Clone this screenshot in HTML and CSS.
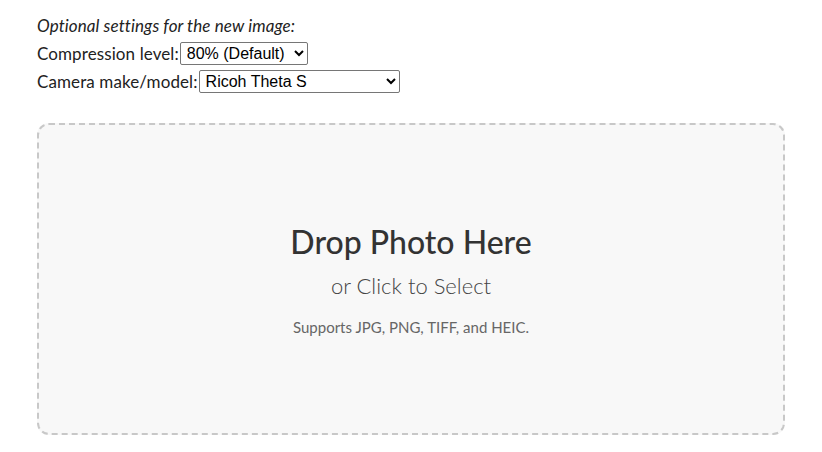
FILE: index.html
```html
<!DOCTYPE html>
<html>
<head>
<meta charset="utf-8">
<link rel="stylesheet" href="styles.css">
</head>
<body>
<div class="page">
  <div class="settings">
    <div class="row note">Optional settings for the new image:</div>
    <div class="row">
      <label for="q">Compression level:</label><select id="q" class="sel sel-q">
        <option>80% (Default)</option>
      </select>
    </div>
    <div class="row">
      <label for="cam">Camera make/model:</label><select id="cam" class="sel sel-cam">
        <option>Ricoh Theta S</option>
      </select>
    </div>
  </div>
  <div class="drop">
    <div class="drop-title">Drop Photo Here</div>
    <div class="drop-sub">or Click to Select</div>
    <div class="drop-note">Supports JPG, PNG, TIFF, and HEIC.</div>
  </div>
</div>
</body>
</html>
```
FILE: styles.css
```css
html, body {
  margin: 0;
  padding: 0;
  background: #fff;
}
.page {
  padding: 11px 37px 0 37px;
  font-family: "Lato", "Open Sans", sans-serif;
  color: #222;
}
.settings {
  display: flex;
  flex-direction: column;
}
.row {
  height: 28px;
  display: flex;
  align-items: center;
  font-size: 17px;
  color: #222;
  letter-spacing: 0.1px;
}
.note {
  font-style: italic;
}
.sel {
  font-family: "Liberation Sans", Arial, sans-serif;
  font-size: 16px;
  height: 23px;
  border: 1px solid #767676;
  border-radius: 2px;
  background: #fff;
  color: #000;
  padding: 0 2px;
  margin-left: 1px;
  letter-spacing: 0;
}
.sel-q { width: 128px; }
.sel-cam { width: 201px; }
.drop {
  margin-top: 28px;
  height: 312px;
  box-sizing: border-box;
  border: 2px dashed #c8c8c8;
  border-radius: 12px;
  background: #f8f8f8;
  display: flex;
  flex-direction: column;
  align-items: center;
  justify-content: center;
}
.drop-title {
  font-size: 32px;
  font-weight: 500;
  color: #333;
  line-height: 40px;
}
.drop-sub {
  font-size: 22px;
  font-weight: 300;
  color: #444;
  line-height: 40px;
  margin-top: 4px;
}
.drop-note {
  font-size: 15px;
  font-weight: 400;
  color: #666;
  line-height: 18px;
  margin-top: 12px;
}
```
